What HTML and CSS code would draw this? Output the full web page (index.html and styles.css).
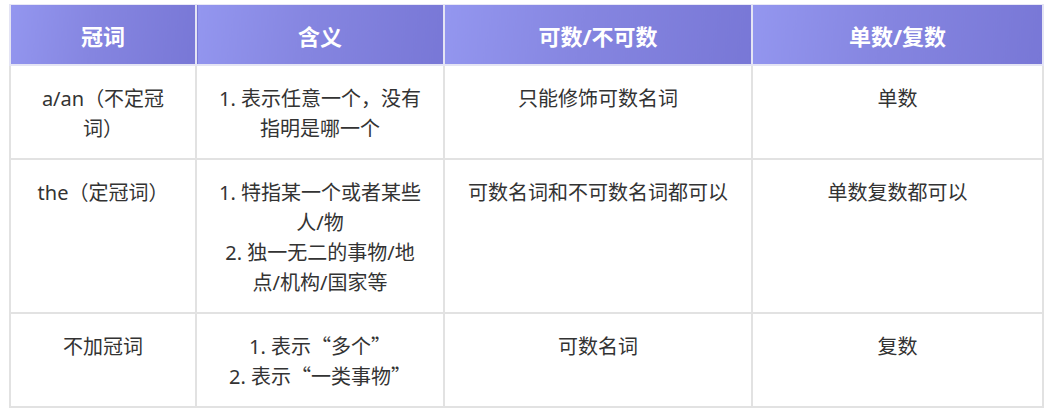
FILE: index.html
```html
<!DOCTYPE html>
<html lang="zh">
<head>
<meta charset="utf-8">
<link rel="stylesheet" href="styles.css">
</head>
<body>
<div class="wrap">
<table class="grid">
  <colgroup>
    <col class="c1"><col class="c2"><col class="c3"><col class="c4">
  </colgroup>
  <thead>
    <tr>
      <th>冠词</th>
      <th>含义</th>
      <th>可数<span class="lat">/</span>不可数</th>
      <th>单数<span class="lat">/</span>复数</th>
    </tr>
  </thead>
  <tbody>
    <tr>
      <td><span class="lat">a/an</span>（不定冠词）</td>
      <td><span class="lat">1. </span>表示任意一个，没有指明是哪一个</td>
      <td>只能修饰可数名词</td>
      <td>单数</td>
    </tr>
    <tr>
      <td><span class="lat">the</span>（定冠词）</td>
      <td><span class="lat">1. </span>特指某一个或者某些人<span class="lat">/</span>物<br><span class="lat">2. </span>独一无二的事物<span class="lat">/</span>地点<span class="lat">/</span>机构<span class="lat">/</span>国家等</td>
      <td>可数名词和不可数名词都可以</td>
      <td>单数复数都可以</td>
    </tr>
    <tr>
      <td>不加冠词</td>
      <td><span class="lat">1. </span>表示“多个”<br><span class="lat">2. </span>表示“一类事物”</td>
      <td>可数名词</td>
      <td>复数</td>
    </tr>
  </tbody>
</table>
</div>
</body>
</html>
```

FILE: styles.css
```css
html, body {
  margin: 0;
  padding: 0;
  background: #ffffff;
}

.wrap {
  padding: 4px 0 0 9px;
}

.grid {
  border-collapse: collapse;
  table-layout: fixed;
  width: 1033px;
  font-family: "Noto Sans CJK SC", "Noto Sans", sans-serif;
}

.c1 { width: 186px; }
.c2 { width: 248px; }
.c3 { width: 308px; }
.c4 { width: 291px; }

.lat {
  font-family: "Noto Sans", "Noto Sans CJK SC", sans-serif;
  line-height: 1;
}

.grid th {
  height: 59px;
  padding: 0 10px;
  background: linear-gradient(100deg, #9396ef 0%, #8585e0 45%, #7877d6 100%);
  color: #ffffff;
  font-size: 22px;
  font-weight: 700;
  text-align: center;
  vertical-align: middle;
  border: 2px solid #e4e4f4;
  border-top: 1px solid #e8e8f6;
}

.grid td {
  padding: 17px 22px 15px;
  border: 2px solid #e2e2e2;
  color: #333333;
  font-size: 20px;
  line-height: 30px;
  text-align: center;
  vertical-align: top;
}
```
